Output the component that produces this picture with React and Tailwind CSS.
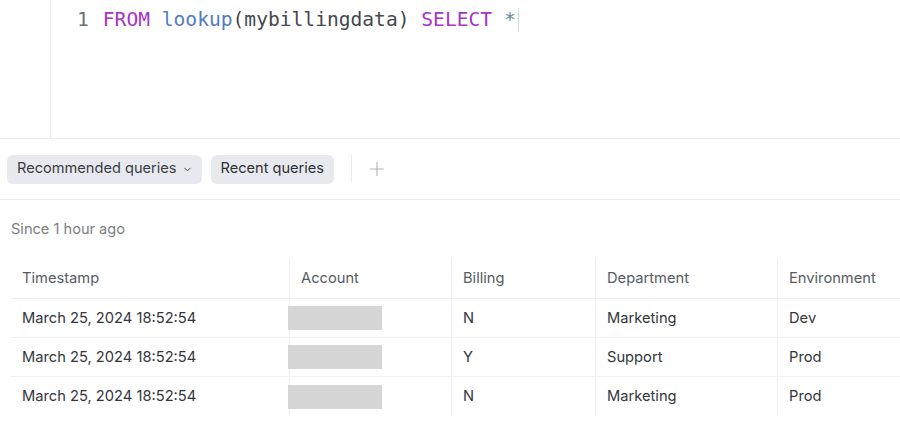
import { ChevronDown, Plus } from "lucide-react"

const rows = [
  { ts: "March 25, 2024 18:52:54", billing: "N", dept: "Marketing", env: "Dev" },
  { ts: "March 25, 2024 18:52:54", billing: "Y", dept: "Support", env: "Prod" },
  { ts: "March 25, 2024 18:52:54", billing: "N", dept: "Marketing", env: "Prod" },
]

const cols = "grid grid-cols-[278px_162px_144px_182px_1fr]"

function App() {
  return (
    <div className="w-[900px] h-[430px] bg-white overflow-hidden font-['Inter',sans-serif]">
      {/* editor */}
      <div className="h-[139px] flex border-b border-[#ececf0]">
        <div className="w-[51px] border-r border-[#ececf0]" />
        <div className="pl-[26px] pt-[7px] flex items-start font-['DejaVu_Sans_Mono',monospace] text-[19.6px] leading-[26px] whitespace-pre">
          <span className="text-[#6b6f76]">1</span>
          <span className="ml-[14px]">
            <span className="text-[#a634c6]">FROM</span>{" "}
            <span className="text-[#4f7cc2]">lookup</span>
            <span className="text-[#45484e]">(mybillingdata)</span>{" "}
            <span className="text-[#a634c6]">SELECT</span>{" "}
            <span className="text-[#5f8d9c]">*</span>
          </span>
          <span className="ml-[2px] mt-[1px] w-[1px] h-[24px] bg-[#d8d8dc]" />
        </div>
      </div>

      {/* toolbar */}
      <div className="h-[61px] flex items-center pl-[7px] border-b border-[#ececf0]">
        <button className="h-[29px] pl-[10px] pr-[9px] flex items-center gap-[5px] rounded-md bg-[#e8e9ee] text-[14.6px] text-[#3b3d42]">
          Recommended queries
          <ChevronDown size={11} strokeWidth={2} />
        </button>
        <button className="ml-[9px] h-[29px] px-[10px] rounded-md bg-[#e8e9ee] text-[14.6px] text-[#2f3136]">
          Recent queries
        </button>
        <div className="ml-[17px] w-[1px] h-[28px] bg-[#ececf0]" />
        <Plus className="ml-[14px] text-[#b3b5ba]" size={22} strokeWidth={1.2} />
      </div>

      <div className="h-[59px] pt-[1px] pl-[11px] flex items-center text-[14.6px] text-[#7b7e84]">Since 1 hour ago</div>

      {/* table */}
      <div className="ml-[11px] text-[14.7px]">
        <div className={`${cols} h-[40px] border-b border-[#f0f0f2] text-[#575b62]`}>
          {["Timestamp", "Account", "Billing", "Department", "Environment"].map((h, i) => (
            <div key={h} className={`flex items-center ${i === 0 ? "pl-[11px]" : "pl-[11px] border-l border-[#f0f0f2]"}`}>{h}</div>
          ))}
        </div>
        {rows.map((r, idx) => (
          <div key={idx} className={`${cols} h-[39px] text-[#33363b] ${idx < rows.length - 1 ? "border-b border-[#f0f0f2]" : ""}`}>
            <div className="flex items-center pl-[11px]">{r.ts}</div>
            <div className="flex items-center border-l border-[#f0f0f2]">
              <div className="-ml-[2px] w-[94px] h-[24px] bg-[#d6d6d6]" />
            </div>
            <div className="flex items-center pl-[11px] border-l border-[#f0f0f2]">{r.billing}</div>
            <div className="flex items-center pl-[11px] border-l border-[#f0f0f2]">{r.dept}</div>
            <div className="flex items-center pl-[11px] border-l border-[#f0f0f2]">{r.env}</div>
          </div>
        ))}
      </div>
    </div>
  )
}

export default App
